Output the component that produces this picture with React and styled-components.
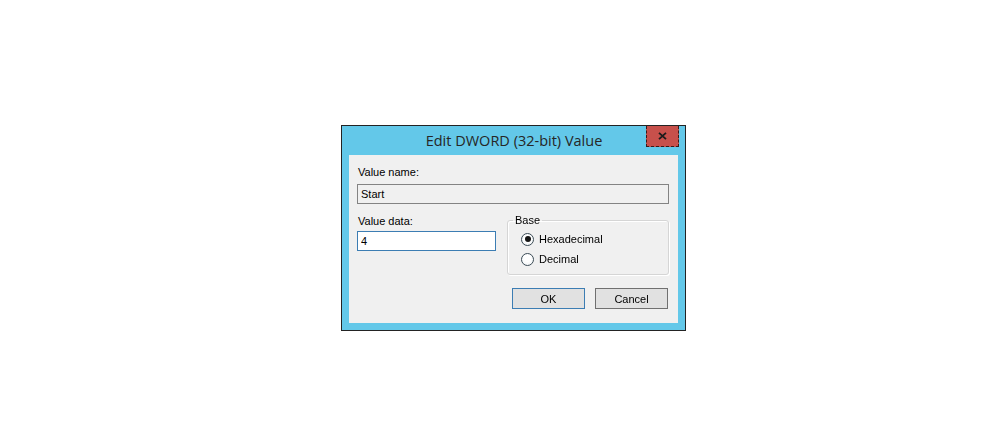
import React, { useState } from 'react';
import styled, { createGlobalStyle } from 'styled-components';

const GlobalStyle = createGlobalStyle`
  html, body {
    margin: 0;
    padding: 0;
    background: #ffffff;
  }
  body {
    font-family: "Liberation Sans", Arial, sans-serif;
  }
`;

const Page = styled.div`
  width: 1001px;
  height: 442px;
  box-sizing: border-box;
  padding: 125px 0 0 341px;
`;

const Window = styled.div`
  width: 345px;
  height: 206px;
  box-sizing: border-box;
  border: 1px solid #232323;
  background: #63c8e9;
  padding: 0 7px 7px;
  display: flex;
  flex-direction: column;
`;

const TitleBar = styled.div`
  height: 29px;
  display: grid;
  grid-template-columns: 1fr auto 1fr;
  align-items: start;
`;

const Title = styled.div`
  grid-column: 2;
  font-family: "Open Sans", "Noto Sans", sans-serif;
  font-size: 14.5px;
  line-height: 29px;
  color: #262626;
  white-space: nowrap;
  padding-left: 1px;
`;

const CloseButton = styled.button`
  grid-column: 3;
  justify-self: end;
  margin-right: -1px;
  width: 33px;
  height: 21px;
  box-sizing: border-box;
  padding: 0;
  border: 1px dashed #3a1a18;
  border-top: none;
  background: #c7504b;
  display: flex;
  align-items: center;
  justify-content: center;
`;

const Client = styled.div`
  flex: 1;
  background: #f0f0f0;
  box-sizing: border-box;
  padding: 11px 9px 0 8px;
  display: flex;
  flex-direction: column;
  font-size: 11px;
  color: #000;
`;

const Label = styled.div`
  line-height: 13px;
  padding-left: 1px;
  margin-top: ${(p) => p.$top || 0}px;
`;

const TextBox = styled.input`
  display: block;
  box-sizing: border-box;
  width: ${(p) => p.$width}px;
  height: 20px;
  margin: ${(p) => p.$top || 0}px 0 0;
  padding: 0 3px;
  font-family: "Liberation Sans", Arial, sans-serif;
  font-size: 11px;
  color: #000;
  outline: none;
  border: 1px solid ${(p) => (p.$focused ? '#3c7db3' : '#838383')};
  background: ${(p) => (p.$focused ? '#ffffff' : '#f0f0f0')};
  caret-color: #000;
`;

const DataRow = styled.div`
  display: grid;
  grid-template-columns: 139px 162px;
  column-gap: 11px;
  align-items: start;
`;

const GroupBox = styled.fieldset`
  margin: 10px 0 0;
  padding: 2px 6px 5px 13px;
  border: 1px solid #d5d5d5;
  border-radius: 3px;
  box-shadow: inset 1px 1px 0 #ffffff, 1px 1px 0 #ffffff;
  min-width: 0;
`;

const Legend = styled.legend`
  margin-left: -8px;
  padding: 0 2px;
  line-height: 13px;
  font-size: 11px;
`;

const RadioRow = styled.label`
  display: flex;
  align-items: center;
  gap: 5px;
  height: 20px;
  line-height: 13px;
`;

const RadioMark = styled.span`
  width: 13px;
  height: 13px;
  box-sizing: border-box;
  border-radius: 50%;
  border: 1px solid #3b4b55;
  background: radial-gradient(circle at 50% 40%, #ffffff 40%, #eaeef1 100%);
  display: flex;
  align-items: center;
  justify-content: center;
  &::after {
    content: '';
    width: 6px;
    height: 6px;
    border-radius: 50%;
    background: ${(p) => (p.$checked ? '#151515' : 'transparent')};
  }
`;

const ButtonRow = styled.div`
  display: flex;
  justify-content: flex-end;
  gap: 10px;
  margin-top: 13px;
  padding-right: 1px;
`;

const Button = styled.button`
  width: 73px;
  height: 21px;
  box-sizing: border-box;
  padding: 0;
  font-family: "Liberation Sans", Arial, sans-serif;
  font-size: 11px;
  color: #000;
  background: #e1e1e1;
  border: 1px solid ${(p) => (p.$default ? '#3c7db3' : '#707070')};
`;

const CloseGlyph = () => (
  <svg width="9" height="8" viewBox="0 0 9 8">
    <path d="M1 0.8 L8 7.2 M8 0.8 L1 7.2" stroke="#1b1b1b" strokeWidth="1.8" />
  </svg>
);

const Radio = ({ checked, label, onSelect }) => (
  <RadioRow onClick={onSelect}>
    <RadioMark $checked={checked} />
    {label}
  </RadioRow>
);

export default function App() {
  const [base, setBase] = useState('hex');
  const [data, setData] = useState('4');

  return (
    <>
      <GlobalStyle />
      <Page>
        <Window>
          <TitleBar>
            <Title>Edit DWORD (32-bit) Value</Title>
            <CloseButton aria-label="Close">
              <CloseGlyph />
            </CloseButton>
          </TitleBar>
          <Client>
            <Label>Value name:</Label>
            <TextBox $width={312} $top={5} value="Start" readOnly />
            <DataRow>
              <div>
                <Label $top={11}>Value data:</Label>
                <TextBox
                  $width={139}
                  $top={3}
                  $focused
                  autoFocus
                  value={data}
                  onChange={(e) => setData(e.target.value)}
                />
              </div>
              <GroupBox>
                <Legend>Base</Legend>
                <Radio label="Hexadecimal" checked={base === 'hex'} onSelect={() => setBase('hex')} />
                <Radio label="Decimal" checked={base === 'dec'} onSelect={() => setBase('dec')} />
              </GroupBox>
            </DataRow>
            <ButtonRow>
              <Button $default>OK</Button>
              <Button>Cancel</Button>
            </ButtonRow>
          </Client>
        </Window>
      </Page>
    </>
  );
}
